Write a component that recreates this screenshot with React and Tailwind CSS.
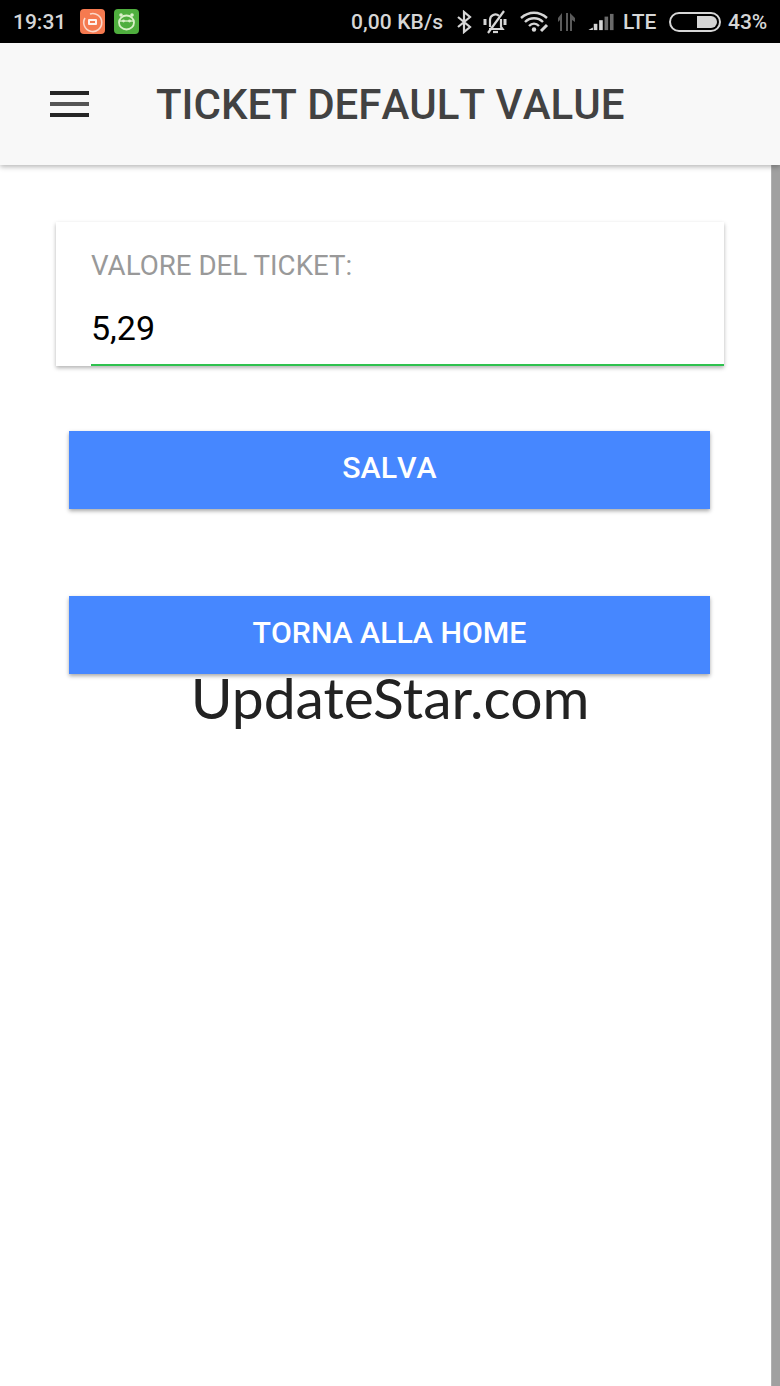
import React from "react";

const roboto = { fontFamily: "Roboto, sans-serif" };

function StatusBar() {
  return (
    <div className="flex h-[43px] items-center bg-black pt-[1px] text-[#d6d6d6] font-['Roboto',sans-serif] font-medium text-[21px] leading-none">
      <span className="ml-[13px] w-[54px]">19:31</span>
      <svg className="ml-[13px] -mt-[1px]" width="25" height="25" viewBox="0 0 25 25">
        <rect width="25" height="25" rx="4" fill="#f57a50" />
        <path d="M5 9a9 9 0 1 0 5-4" fill="none" stroke="#fbd7c8" strokeWidth="1.6" />
        <rect x="8" y="10" width="9" height="6" rx="1" fill="#fff" opacity=".9" />
        <rect x="10" y="12" width="5" height="2" fill="#f57a50" />
      </svg>
      <svg className="ml-[9px] -mt-[1px]" width="25" height="25" viewBox="0 0 25 25">
        <rect width="25" height="25" rx="4" fill="#4fae3e" />
        <circle cx="7" cy="6" r="1.8" fill="#d9f0c8" />
        <circle cx="18" cy="6" r="1.8" fill="#d9f0c8" />
        <ellipse cx="12.5" cy="13.5" rx="7.5" ry="7" fill="none" stroke="#d9f0c8" strokeWidth="1.8" />
        <path d="M5 12h15" stroke="#d9f0c8" strokeWidth="1.4" />
        <circle cx="9.5" cy="12" r="1.4" fill="#d9f0c8" />
        <circle cx="15.5" cy="12" r="1.4" fill="#d9f0c8" />
      </svg>
      <span className="ml-[212px] w-[92px] whitespace-nowrap tracking-[0.1px]">0,00 KB/s</span>
      <svg className="ml-[13px] -mt-[1px]" width="16" height="24" viewBox="0 0 16 24" fill="none" stroke="#d6d6d6" strokeWidth="2.2">
        <path d="M2 7l12 10-6 5V2l6 5L2 17" />
      </svg>
      <svg className="ml-[10px] -mt-[1px]" width="26" height="26" viewBox="0 0 26 26" fill="none" stroke="#d6d6d6" strokeWidth="2.2">
        <path d="M8 18V11a5.5 5.5 0 0 1 9-4.2M19 10v8l1.5 2H7" />
        <path d="M11 23h5" />
        <path d="M3 10v6M23 10v6" strokeWidth="3" />
        <path d="M22 2L6 24" />
      </svg>
      <svg className="ml-[12px] -mt-[1px]" width="30" height="24" viewBox="0 0 30 24" fill="none" stroke="#d6d6d6" strokeWidth="2.4">
        <path d="M1 8c8-7 18-7 26 0" />
        <path d="M5 12c5-5 13-5 18 0" />
        <path d="M9 16c3-3 7-3 10 0" />
        <circle cx="14" cy="19.5" r="2.2" fill="#d6d6d6" stroke="none" />
        <path d="M21 21l6-6" strokeWidth="3" />
      </svg>
      <svg className="ml-[8px] -mt-[1px]" width="19" height="20" viewBox="0 0 19 20" fill="#5a5a5a">
        <path d="M2 19V8L0 10V6l4-5v18zM8 1h2v18H8zM12 1l5 5v4l-3-2v11h-2z" />
      </svg>
      <svg className="ml-[10px] -mt-[1px]" width="27" height="18" viewBox="0 0 29 20">
        <path d="M1 19l5-3v3z" fill="#d6d6d6" />
        <rect x="7" y="12" width="4" height="7" fill="#d6d6d6" />
        <rect x="13" y="8" width="4" height="11" fill="#d6d6d6" />
        <rect x="19" y="4" width="4" height="15" fill="#6a6a6a" />
        <rect x="25" y="1" width="4" height="18" fill="#6a6a6a" />
      </svg>
      <span className="ml-[9px] w-[36px]">LTE</span>
      <div className="ml-[10px] -mt-[1px] flex h-[20px] w-[52px] items-center justify-end rounded-full border-2 border-[#d6d6d6] p-[2px]">
        <div className="h-[12px] w-[20px] rounded-r-full bg-[#d6d6d6]" />
      </div>
      <span className="ml-[7px]">43%</span>
    </div>
  );
}

function AppBar() {
  return (
    <div className="relative z-10 flex h-[122px] items-center bg-[#f8f8f8] shadow-[0_2px_5px_rgba(0,0,0,0.28)]">
      <div className="ml-[50px] flex h-[26px] w-[39px] flex-col justify-between">
        <div className="h-[4px] bg-[#262626]" />
        <div className="h-[4px] bg-[#555555]" />
        <div className="h-[4px] bg-[#262626]" />
      </div>
      <h1 className="ml-[67px] whitespace-nowrap pt-[2px] text-[42px] font-medium leading-none text-[#424242] [font-kerning:none]" style={roboto}>
        TICKET DEFAULT VALUE
      </h1>
    </div>
  );
}

function Btn({ children, className }) {
  return (
    <button
      className={`flex h-[78px] w-[641px] items-center justify-center bg-[#4687ff] pb-[4px] text-[30.3px] font-medium text-white shadow-[0_2px_4px_rgba(0,0,0,0.35)] [font-kerning:none] ${className}`}
      style={roboto}
    >
      {children}
    </button>
  );
}

export default function App() {
  return (
    <div className="flex h-[1386px] w-[780px] flex-col overflow-hidden bg-white">
      <StatusBar />
      <AppBar />
      <div className="flex flex-1">
        <main className="flex w-[771px] flex-col pl-[56px] pt-[57px]">
          <div className="h-[144px] w-[668px] bg-white pl-[35px] shadow-[0_2px_4px_rgba(0,0,0,0.3)]" style={roboto}>
            <div className="pt-[28px] text-[27.7px] leading-[32px] text-[#999999]">VALORE DEL TICKET:</div>
            <div className="flex h-[84px] flex-col justify-between">
              <div className="pt-[26px] text-[34px] leading-[40px] text-black">5,29</div>
              <div className="h-[2px] w-[633px] bg-[#2fc24f]" />
            </div>
          </div>
          <Btn className="ml-[13px] mt-[65px]">SALVA</Btn>
          <Btn className="ml-[13px] mt-[87px]">TORNA ALLA HOME</Btn>
          <div className="-mt-[8px] w-[668px] text-center font-['Lato',sans-serif] text-[57px] leading-[62px] text-[#222222]">
            UpdateStar.com
          </div>
        </main>
        <div className="w-[9px] border-l border-[#b0b0b0] bg-[#a0a0a0]" />
      </div>
    </div>
  );
}
